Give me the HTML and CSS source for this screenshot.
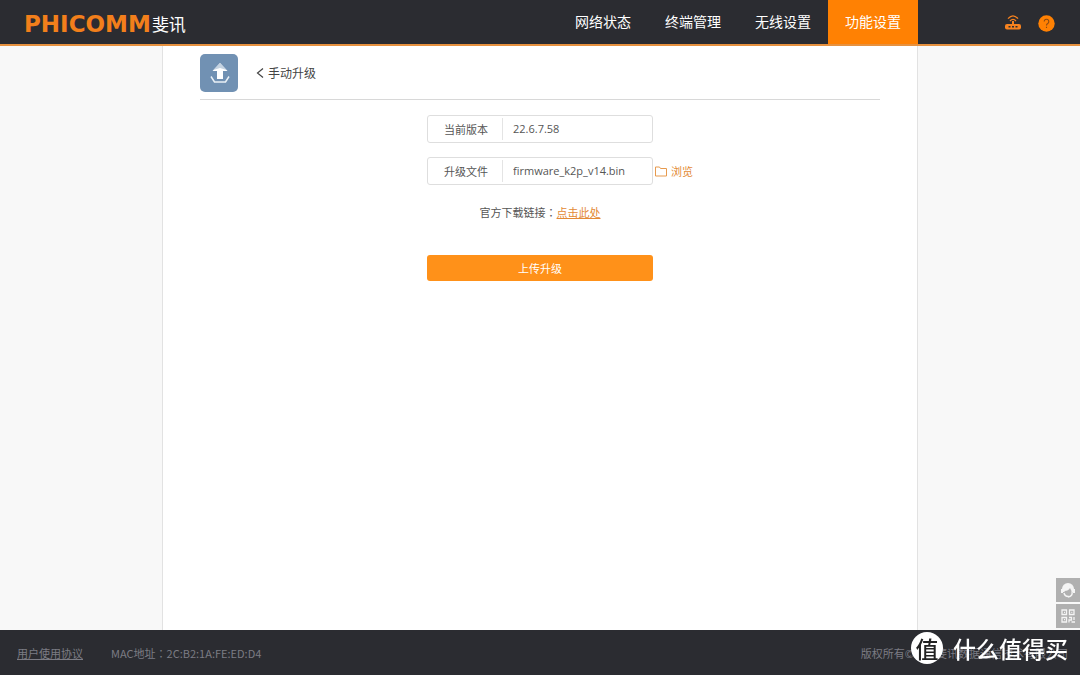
FILE: index.html
```html
<!DOCTYPE html>
<html lang="zh-CN">
<head>
<meta charset="utf-8">
<title>手动升级</title>
<link rel="stylesheet" href="styles.css">
</head>
<body>
<header class="header">
  <div class="logo"><span class="logo-latin">PHICOMM</span><span class="logo-cn">斐讯</span></div>
  <nav class="nav">
    <a class="nav-item" href="#">网络状态</a>
    <a class="nav-item" href="#">终端管理</a>
    <a class="nav-item" href="#">无线设置</a>
    <a class="nav-item active" href="#">功能设置</a>
  </nav>
  <div class="tools">
    <button class="tool" type="button" aria-label="路由器">
      <svg width="16" height="16" viewBox="0 0 16 16">
        <rect x="0" y="9" width="16" height="5.500" rx="2" fill="#f6821f"/>
        <path d="M3.500 11.700h2M7 11.700h2M10.500 11.700h2" stroke="#2b2c31" stroke-width="1.500"/>
        <path d="M3 3.600Q8-2 13 3.600M5 6Q8 2.600 11 6" fill="none" stroke="#f6821f" stroke-width="1.300"/>
        <path d="M8 6v3" stroke="#f6821f" stroke-width="2"/>
      </svg>
    </button>
    <button class="tool" type="button" aria-label="帮助">
      <svg width="17" height="17" viewBox="0 0 17 17">
        <circle cx="8.500" cy="8.500" r="8.200" fill="#ff8103"/>
        <path d="M6.200 6.500a2.300 2.300 0 1 1 3.500 2C8.800 9 8.500 9.400 8.500 10.600M8.500 11.800v1.300" fill="none" stroke="#8a4a14" stroke-width="1.100"/>
      </svg>
    </button>
  </div>
</header>

<main class="panel">
  <div class="title-bar">
    <div class="title-icon">
      <svg width="38" height="38" viewBox="0 0 38 38">
        <path d="M20 9l7.500 8H23v8h-6v-8h-4.500z" fill="#fff"/>
        <path d="M20 9l6.500 7-6.500-2-6.500 2z" fill="#c5d3e1"/>
        <path d="M11 22.500l3.500 5.500h11l3.500-5.500" fill="none" stroke="#e9f0f6" stroke-width="1.500"/>
      </svg>
    </div>
    <a class="back" href="#">
      <svg width="8" height="12" viewBox="0 0 8 12"><path d="M7 1.500L1.500 6 7 10.500" fill="none" stroke="#444" stroke-width="1.200"/></svg>
      <h1 class="title">手动升级</h1>
    </a>
  </div>

  <form class="form">
    <div class="field">
      <label class="label" for="version">当前版本</label>
      <input class="input" id="version" type="text" value="22.6.7.58" readonly>
    </div>
    <div class="file-row">
      <div class="field">
        <label class="label" for="file">升级文件</label>
        <input class="input" id="file" type="text" value="firmware_k2p_v14.bin" readonly>
      </div>
      <button class="browse" type="button">
        <svg width="12" height="11" viewBox="0 0 12 11"><path d="M.5 10V1h4l1 1.500h6V10z" fill="none" stroke="#e79a4e"/></svg>
        浏览
      </button>
    </div>
    <p class="download">官方下载链接<span class="colon" lang="zh-TW">：</span><a class="download-link" href="#">点击此处</a></p>
    <button class="submit" type="button">上传升级</button>
  </form>
</main>

<footer class="footer">
  <a class="agreement" href="#">用户使用协议</a>
  <span>MAC地址<span class="colon" lang="zh-TW">：</span>2C:B2:1A:FE:ED:D4</span>
  <span class="copyright">版权所有©上海斐讯数据通信技术有限公司</span>
</footer>

<aside class="side">
  <button class="side-button" type="button" aria-label="客服">
    <svg width="16" height="16" viewBox="0 0 16 16">
      <path d="M2 10V7a6 6 0 0 1 12 0v3" fill="#f4f4f4"/>
      <path d="M1 7h2v4H1zM13 7h2v4h-2z" fill="#f4f4f4"/>
      <path d="M4.500 9q4 0 5.500-3l1.500 3q0 4-3.500 4T4.500 9z" fill="#b0b0b0"/>
      <path d="M4 11q1 4 5 3.500M12 10q1 4-4 5" fill="none" stroke="#f4f4f4" stroke-width="1.500"/>
    </svg>
  </button>
  <button class="side-button" type="button" aria-label="二维码">
    <svg width="14" height="14" viewBox="0 0 14 14" fill="none" stroke="#f4f4f4" stroke-width="1.300">
      <path d="M1 1h4.500v4.500H1zM8.500 1H13v4.500H8.500zM1 8.500h4.500V13H1zM3 3.300h1M10.300 3.300h1M3 10.700h1M8 8.500h2.500V11H8v2.500M13 8v3M10.500 13H14"/>
    </svg>
  </button>
</aside>

<div class="watermark"><span class="watermark-badge">值</span><span>什么值得买</span></div>
</body>
</html>
```
FILE: styles.css
```css
* {
  box-sizing: border-box;
}

body {
  margin: 0;
  min-height: 100vh;
  display: flex;
  flex-direction: column;
  background: #f8f8f8;
  color: #555;
  font-family: "Noto Sans CJK SC", sans-serif;
  font-size: 11px;
  line-height: 16px;
}

button,
input {
  font: inherit;
}

button {
  padding: 0;
  border: 0;
  background: none;
  cursor: pointer;
}

svg {
  display: block;
}

.colon {
  font-family: "Noto Sans CJK TC", sans-serif;
}

.header {
  display: flex;
  background: #2b2c31;
  border-bottom: 2px solid #e6913f;
  height: 46px;
}

.logo {
  display: flex;
  align-items: center;
  padding: 3px 0 0 24px;
  gap: 1px;
}

.logo-latin {
  color: #f27f1b;
  font-family: "DejaVu Sans", sans-serif;
  font-size: 23px;
  font-weight: 700;
}

.logo-cn {
  color: #fff;
  font-size: 17px;
}

.nav {
  display: flex;
  margin-left: auto;
}

.nav-item {
  width: 90px;
  padding-bottom: 2px;
  color: #fff;
  font-size: 14px;
  line-height: 42px;
  text-align: center;
  text-decoration: none;
}

.nav-item.active {
  background: #ff8103;
}

.tools {
  width: 15%;
  display: flex;
  align-items: center;
  justify-content: flex-end;
  gap: 17px;
  padding: 2px 25px 0 0;
}

.panel {
  flex: 1;
  width: 70%;
  min-width: 360px;
  margin: 0 auto;
  padding: 8px 37px;
  background: #fff;
  border: solid #e2e2e2;
  border-width: 0 1px;
}

.title-bar {
  display: flex;
  align-items: center;
  gap: 18px;
  padding-bottom: 7px;
  border-bottom: 1px solid #d8d8d8;
}

.title-icon {
  border-radius: 5px;
  background: #7191b3;
}

.back {
  display: flex;
  align-items: center;
  gap: 4px;
  color: #444;
  text-decoration: none;
}

.title {
  margin: 0;
  font-size: 12px;
  font-weight: 400;
}

.form {
  width: 226px;
  margin: 15px auto 0;
}

.field {
  width: 226px;
  flex: none;
  display: flex;
  align-items: center;
  height: 28px;
  border: 1px solid #dedede;
  border-radius: 3px;
}

.label {
  width: 75px;
  flex: none;
  padding-left: 2px;
  border-right: 1px solid #e4e4e4;
  line-height: 22px;
  text-align: center;
}

.input {
  flex: 1;
  min-width: 0;
  padding: 0 10px;
  border: 0;
  background: none;
  color: #555;
  font-family: "Open Sans", "Noto Sans CJK SC", sans-serif;
}

.file-row {
  display: flex;
  align-items: center;
  gap: 2px;
  margin-top: 14px;
}

.browse {
  flex: none;
  display: flex;
  align-items: center;
  gap: 4px;
  color: #e38a35;
}

.download {
  margin: 19px 0 35px;
  text-align: center;
}

.download-link {
  color: #e38a35;
}

.submit {
  width: 100%;
  height: 26px;
  border-radius: 3px;
  background: #ff9119;
  color: #fff;
}

.footer {
  display: flex;
  align-items: center;
  gap: 28px;
  height: 45px;
  padding: 0 12px 0 17px;
  background: #2b2c31;
  color: #7c7c84;
}

.agreement {
  color: inherit;
}

.copyright {
  margin-left: auto;
}

.side {
  position: fixed;
  right: 0;
  bottom: 47px;
  display: grid;
  gap: 2px;
}

.side-button {
  display: grid;
  place-items: center;
  width: 24px;
  height: 24px;
  background: #b0b0b0;
}

.watermark {
  position: fixed;
  right: 12px;
  bottom: 11px;
  display: flex;
  align-items: center;
  gap: 10px;
  color: #fff;
  font-size: 23px;
  font-weight: 500;
  line-height: 32px;
}

.watermark-badge {
  width: 32px;
  border-radius: 50%;
  background: #fff;
  color: #222;
  text-align: center;
}
```
